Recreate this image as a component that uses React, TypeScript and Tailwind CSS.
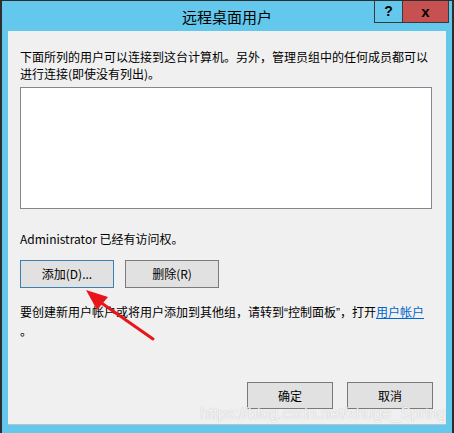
import React from "react";

const cjk = { fontFamily: '"Noto Sans CJK SC", "Microsoft YaHei", sans-serif' };

function Btn({ children, primary, className = "" }: { children: React.ReactNode; primary?: boolean; className?: string }) {
  return (
    <div
      className={
        "flex items-center justify-center bg-[#e1e1e1] border text-[12px] text-black " +
        (primary ? "border-[#3c7fb1] " : "border-[#7a7a7a] ") +
        className
      }
    >
      {children}
    </div>
  );
}

export default function App() {
  return (
    <div className="w-[454px] h-[433px] relative overflow-hidden bg-[#64c8ec] border-t border-l-2 border-r-2 border-[#2e2e2e] flex flex-col" style={cjk}>
      {/* title bar */}
      <div className="h-[30px] shrink-0 flex items-center justify-center relative">
        <span className="text-[15px] text-black leading-none">远程桌面用户</span>
        <div className="absolute top-[-1px] right-[3px] flex">
          <div className="w-[29px] h-[23px] border border-[#3a3a3a] flex items-center justify-center text-[14px] font-bold text-black" style={{ fontFamily: '"Liberation Sans", sans-serif' }}>?</div>
          <div className="w-[46px] h-[23px] border border-l-0 border-[#3a3a3a] bg-[#c75050] flex items-center justify-center text-[15px] font-bold text-black leading-none" style={{ fontFamily: '"Liberation Sans", sans-serif' }}>x</div>
        </div>
      </div>
      {/* client area */}
      <div className="mx-[6px] h-[394px] shrink-0 bg-[#f0f0f0] border-b border-[#b4c4cc] flex flex-col px-[12px] text-[12px] text-black">
        <p className="mt-[17px] leading-[17px]">下面所列的用户可以连接到这台计算机。另外，管理员组中的任何成员都可以进行连接(即使没有列出)。</p>
        <div className="mt-[5px] h-[122px] w-[412px] bg-white border border-[#828790]" />
        <p className="mt-[21px] leading-[17px]">Administrator 已经有访问权。</p>
        <div className="mt-[13px] flex gap-[11px]">
          <Btn primary className="w-[94px] h-[28px]">添加(D)...</Btn>
          <Btn className="w-[94px] h-[28px]">删除(R)</Btn>
        </div>
        <p className="mt-[15px] leading-[17px]">
          <span className="whitespace-nowrap">
            要创建新用户帐户或将用户添加到其他组，请转到<span style={{ fontFamily: '"Liberation Sans", sans-serif' }}>“</span>控制面板<span style={{ fontFamily: '"Liberation Sans", sans-serif' }}>”</span>，打开<span className="text-[#0066cc] underline">用户帐户</span>
          </span>
          <br />
          。
        </p>
        <div className="mt-auto mb-[15px] flex justify-end gap-[14px] pr-[1px]">
          <Btn className="w-[86px] h-[27px]">确定</Btn>
          <Btn className="w-[86px] h-[27px]">取消</Btn>
        </div>
      </div>

      {/* watermark */}
      <div
        className="absolute left-[198px] top-[404px] text-[16px] leading-[18px] text-white/85 whitespace-nowrap"
        style={{ fontFamily: '"Liberation Sans", Arial, sans-serif', textShadow: "0 0 1px rgba(90,90,90,0.45)" }}
      >
        https://blog.csdn.net/zhuge_Spring
      </div>

      {/* red arrow annotation */}
      <svg className="absolute left-[-2px] top-[-1px] pointer-events-none" width="454" height="433" viewBox="0 0 454 433">
        <line x1="153" y1="339" x2="100" y2="302" stroke="#e8161b" strokeWidth="3" strokeLinecap="round" />
        <polygon points="86,290 108,297 97,310" fill="#e8161b" />
      </svg>
    </div>
  );
}
